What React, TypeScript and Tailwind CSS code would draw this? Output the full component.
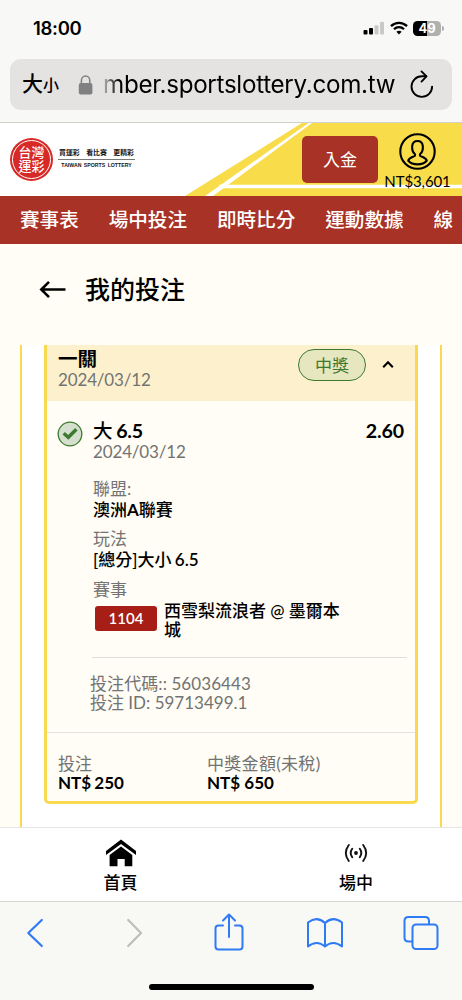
import type { ReactNode } from "react";

const NAV_ITEMS = ["賽事表", "場中投注", "即時比分", "運動數據", "線"];

function StatusBar() {
  return (
    <div className="flex h-[59px] items-start justify-between pl-[33px] pr-[18px] pt-[17px] font-['Inter',sans-serif]">
      <span className="text-[18.5px] leading-[22px] font-semibold tracking-[-0.3px]">18:00</span>
      <div className="flex h-[22px] items-center">
        <svg width="22" height="14" viewBox="0 0 22 14" className="mr-[5px]">
          <rect x="0.5" y="9" width="4" height="4.5" rx="1" fill="#000" />
          <rect x="6" y="7" width="4" height="6.5" rx="1" fill="#000" />
          <rect x="11.5" y="4.2" width="4" height="9.3" rx="1" fill="#c9c9c7" />
          <rect x="17" y="0.8" width="4" height="12.7" rx="1" fill="#c9c9c7" />
        </svg>
        <svg width="18" height="14" viewBox="0 0 18 14" className="mr-[5px]">
          <path d="M1 5.2C5.5 0.7 12.5 0.7 17 5.2" fill="none" stroke="#000" strokeWidth="2.4" />
          <path d="M4 8.3C6.8 5.5 11.2 5.5 14 8.3" fill="none" stroke="#000" strokeWidth="2.3" />
          <path d="M6.4 10.7C7.9 9.3 10.1 9.3 11.6 10.7L9 13.4Z" fill="#000" />
        </svg>
        <div className="flex h-[15px] w-[28px] items-center justify-center rounded-[4.5px] bg-[linear-gradient(90deg,#000_50%,#b0b0ae_50%)] text-[13px] leading-none font-bold text-white">
          49
        </div>
        <div className="ml-px h-[5px] w-[2px] rounded-r-full bg-[#b0b0ae]" />
      </div>
    </div>
  );
}

function AddressBar() {
  return (
    <div className="mx-[10px] flex h-[51px] items-center rounded-[11px] bg-[#e4e3e1] font-['Inter','Noto_Sans_CJK_TC',sans-serif]">
      <div className="ml-[12px] flex w-[38px] items-baseline font-medium">
        <span className="text-[21px] leading-[26px]">大</span>
        <span className="text-[16px] leading-[26px]">小</span>
      </div>
      <svg width="15" height="20" viewBox="0 0 15 20" className="ml-[18px]">
        <rect x="0.8" y="8" width="13.6" height="11.6" rx="2" fill="#808083" />
        <path d="M3.4 9V5.4a4.2 4.4 0 0 1 8.4 0V9" fill="none" stroke="#808083" strokeWidth="1.5" />
      </svg>
      <span className="ml-[10px] w-[294px] bg-[linear-gradient(90deg,#b8b8b6_0,#000_16px)] bg-clip-text text-[24.2px] leading-[32px] tracking-[-0.3px] whitespace-nowrap text-transparent">
        mber.sportslottery.com.tw
      </span>
      <svg width="26" height="30" viewBox="0 0 26 30" className="ml-[12px]" fill="none" stroke="#000" strokeWidth="1.9" strokeLinecap="round" strokeLinejoin="round">
        <path d="M23.1 16.6A10.3 10.3 0 1 1 12.8 6.3H17" />
        <path d="M12.5 1.4L17.5 6.4L12.5 11.6" />
      </svg>
    </div>
  );
}

function SiteHeader() {
  return (
    <header className="relative flex h-[73px] bg-white">
      <svg className="absolute inset-0" width="462" height="73" viewBox="0 0 462 73">
        <path d="M302 0H462V73H185Z" fill="#f9dc4a" />
        <path d="M308.5 0H312L213 73H205Z" fill="#fff" />
        <path d="M219 63.5H462" stroke="#fff" strokeWidth="3.6" />
      </svg>
      <div className="relative ml-[10px] mt-[15px] flex size-[43px] items-center justify-center rounded-full bg-[#d72a27]">
        <div className="flex size-[39px] flex-col items-center justify-center rounded-full border border-white text-[13px] leading-[13.5px] font-medium text-white">
          <span>台灣</span>
          <span>運彩</span>
        </div>
      </div>
      <div className="relative ml-[5px] mt-[23px] w-[77px] text-[#151515]">
        <div className="flex h-[14px] items-center justify-between border-b border-[#777] px-px text-[6.9px] font-bold whitespace-nowrap">
          <span>買運彩</span>
          <span>看比賽</span>
          <span>更精彩</span>
        </div>
        <div className="pt-px text-center font-['Liberation_Sans',sans-serif] text-[5.2px] leading-[8px] font-bold whitespace-nowrap [word-spacing:1px]">
          TAIWAN SPORTS LOTTERY
        </div>
      </div>
      <div className="relative ml-[167px] mt-[13px] flex h-[47px] w-[76px] items-center justify-center rounded-[5px] bg-[#a83226] text-[17px] text-white">
        入金
      </div>
      <div className="relative ml-[6px] mt-[10px] flex w-[67px] flex-col items-center">
        <svg width="38" height="38" viewBox="0 0 38 38" fill="none" stroke="#000" strokeWidth="2.1">
          <circle cx="18.5" cy="18.5" r="17.2" />
          <path d="M15.7 20.8C13.3 18.9 12.9 16.3 13.2 13C13.6 9.7 15.7 8 18.5 8s4.9 1.7 5.3 5c.3 3.3-.1 5.9-2.5 7.8-.8 1.2-.3 2.1.8 2.6 2.9 1.2 5.2 1.8 5.6 4.3-2.3 2.7-5.5 3.7-9.2 3.7s-6.9-1-9.2-3.7c.4-2.5 2.7-3.1 5.6-4.3 1.1-.5 1.6-1.4.8-2.6Z" />
        </svg>
        <span className="text-[15px] leading-[20px] tracking-[-0.1px] whitespace-nowrap">NT$3,601</span>
      </div>
    </header>
  );
}

function MainNav() {
  return (
    <nav className="flex h-[48px] items-center gap-[29.9px] overflow-hidden bg-[#a83226] pl-[20px] text-[19.6px] font-medium whitespace-nowrap text-white">
      {NAV_ITEMS.map((item) => (
        <span key={item}>{item}</span>
      ))}
    </nav>
  );
}

function Field({ label, children }: { label: string; children: ReactNode }) {
  return (
    <div className="mb-[8px]">
      <div className="leading-[21px] text-[#737373]">{label}</div>
      <div className="leading-[21px] font-medium [word-spacing:-1px]">{children}</div>
    </div>
  );
}

function BetCard() {
  return (
    <article className="mx-[22px] h-[459px] rounded-b-[5px] border-x-[3px] border-b-[3px] border-[#f9d94f] bg-[#fffdf5] text-[17px]">
      <div className="flex h-[56px] bg-[#fdf1cd] pl-[11px]">
        <div className="mt-[3px] w-[240px]">
          <div className="text-[19.6px] leading-[22px] font-bold">一關</div>
          <div className="leading-[20px] tracking-[-0.15px] text-[#737373]">2024/03/12</div>
        </div>
        <div className="mt-[4px] flex h-[32px] w-[68px] items-center justify-center rounded-full border-[1.5px] border-[#3d7a30] bg-[#e6e6bf] pt-[2px] text-[#41792f]">
          中獎
        </div>
        <svg width="12" height="9" viewBox="0 0 12 9" className="ml-[16px] mt-[15px]" fill="none" stroke="#000" strokeWidth="2.1">
          <path d="M1.2 7.2L6 2.3L10.8 7.2" />
        </svg>
      </div>

      <div className="flex h-[77px] pl-[11px] pr-[11px] pt-[20px]">
        <svg width="26" height="26" viewBox="0 0 26 26" className="-ml-px">
          <circle cx="13" cy="13" r="11.8" fill="#d5dfcd" stroke="#3d7a30" strokeWidth="1.3" />
          <path d="M6.7 12.2L11.3 16.3L19.4 8.3" fill="none" stroke="#3d7a30" strokeWidth="3.4" />
        </svg>
        <div className="ml-[10px] flex-1">
          <div className="text-[19.6px] leading-[20px] font-medium tracking-[-0.2px] [word-spacing:-1px]">
            大 <span className="font-bold">6.5</span>
          </div>
          <div className="leading-[21px] tracking-[-0.15px] text-[#737373]">2024/03/12</div>
        </div>
        <div className="text-[19.6px] leading-[20px] font-bold tracking-[-0.1px]">2.60</div>
      </div>

      <div className="ml-[45px] mr-[8px] h-[180px] border-b border-[#dededa] pl-px">
        <Field label="聯盟:">
          澳洲<span className="font-bold">A</span>聯賽
        </Field>
        <Field label="玩法">
          [總分]大小 <span className="font-semibold">6.5</span>
        </Field>
        <div className="pt-px leading-[21px] text-[#737373]">賽事</div>
        <div className="ml-[2px] flex">
          <div className="mt-[6px] mr-[7px] flex h-[25px] w-[62px] items-center justify-center rounded-[3px] bg-[#a61e15] text-[15px] font-semibold text-white">
            1104
          </div>
          <div className="mt-[2px] w-[190px] leading-[18.5px] font-medium">西雪梨流浪者 @ 墨爾本城</div>
        </div>
      </div>

      <div className="h-[75px] border-b border-[#e2e2de] pl-[43px] pt-[17px] leading-[18.5px] text-[#737373]">
        <div className="tracking-[0.08px]">投注代碼:: 56036443</div>
        <div>投注 ID: 59713499.1</div>
      </div>

      <div className="flex pl-[11px] pt-[21px] leading-[19px]">
        <div className="w-[149px]">
          <div className="text-[#737373]">投注</div>
          <div className="font-bold [word-spacing:-1px]">NT$ 250</div>
        </div>
        <div>
          <div className="tracking-[0.3px] text-[#737373]">中獎金額(未稅)</div>
          <div className="font-bold">NT$ 650</div>
        </div>
      </div>
    </article>
  );
}

function TabBar() {
  return (
    <div className="flex h-[74px] border-t border-[#e5e5e5] bg-white text-[17px] leading-[22px] font-medium">
      <div className="flex w-[241px] shrink-0 flex-col items-center pt-[10px]">
        <svg width="32" height="30" viewBox="0 0 32 30" fill="#000">
          <path d="M16 1.5L31 13V17L16 6L1 17V13Z" />
          <path d="M16 8.5L27.3 17V28.3H19.7V21H12.5V28.3H4.6V17Z" />
        </svg>
        <span className="mt-[4px]">首頁</span>
      </div>
      <div className="flex w-[230px] shrink-0 flex-col items-center pt-[14px]">
        <svg width="24" height="22" viewBox="0 0 24 22" fill="none" stroke="#111" strokeWidth="1.9" strokeLinecap="round">
          <circle cx="12" cy="11" r="1.9" fill="#111" stroke="none" />
          <path d="M8.2 6.8Q5.2 11 8.2 15.2M15.8 6.8Q18.8 11 15.8 15.2M4.8 3Q-1.2 11 4.8 19M19.2 3Q25.2 11 19.2 19" />
        </svg>
        <span className="mt-[8px]">場中</span>
      </div>
    </div>
  );
}

function BrowserToolbar() {
  return (
    <div className="h-[99px] border-t border-[#d5d5d3] bg-[#f8f8f5]">
      <div className="flex h-[62px] items-center">
        <svg width="18" height="30" viewBox="0 0 18 30" className="ml-[26px]" fill="none" stroke="#2f7af5" strokeWidth="2.2" strokeLinecap="round" strokeLinejoin="round">
          <path d="M15.8 2L2.3 15L15.8 28" />
        </svg>
        <svg width="18" height="30" viewBox="0 0 18 30" className="ml-[81px]" fill="none" stroke="#bdbdbb" strokeWidth="2.2" strokeLinecap="round" strokeLinejoin="round">
          <path d="M3.2 2L16 15L3.2 28" />
        </svg>
        <svg width="32" height="40" viewBox="0 0 32 40" className="mb-[5px] ml-[70px]" fill="none" stroke="#2f7af5" strokeWidth="2" strokeLinecap="round" strokeLinejoin="round">
          <path d="M10 14.5H5.5Q2.5 14.5 2.5 17.5V35.5Q2.5 38.5 5.5 38.5H26.5Q29.5 38.5 29.5 35.5V17.5Q29.5 14.5 26.5 14.5H22" />
          <path d="M16 26V4M10 9.5L16 3.5L22 9.5" />
        </svg>
        <svg width="38" height="32" viewBox="0 0 38 32" className="ml-[61px]" fill="none" stroke="#2f7af5" strokeWidth="2" strokeLinejoin="round">
          <path d="M19 6Q11 -1.5 2 5.5V29.5Q11 22.5 19 29.5Q27 22.5 36 29.5V5.5Q27 -1.5 19 6ZM19 6V29.5" />
        </svg>
        <svg width="36" height="36" viewBox="0 0 36 36" className="ml-[59px]" fill="none" stroke="#2f7af5" strokeWidth="2">
          <rect x="9.5" y="9.5" width="25" height="24.5" rx="3.5" />
          <path d="M9.5 26.5H5.5Q1.5 26.5 1.5 22.5V6Q1.5 2 5.5 2H22Q26 2 26 6V9.5" />
        </svg>
      </div>
      <div className="mx-auto mt-[20px] h-[6px] w-[165px] rounded-full bg-black" />
    </div>
  );
}

export default function App() {
  return (
    <div className="flex h-[1000px] w-[462px] flex-col overflow-hidden bg-[#fffdf5] font-['Lato','Noto_Sans_CJK_TC',sans-serif] text-black">
      <div className="h-[123px] border-b border-[#d3d2ca] bg-[#f8f8f6]">
        <StatusBar />
        <AddressBar />
      </div>
      <SiteHeader />
      <MainNav />
      <main className="h-[583px] overflow-hidden">
        <div className="flex h-[101px] items-start pl-[39px] pt-[30px]">
          <svg width="28" height="20" viewBox="0 0 28 20" className="mt-[6px]" fill="none" stroke="#000" strokeWidth="2.6">
            <path d="M26.5 9.5H2.5M10 1.8L2.3 9.5L10 17.2" />
          </svg>
          <h1 className="ml-[18px] text-[25px] leading-[30px] font-medium">我的投注</h1>
        </div>
        <section className="mx-[20px] h-[482px] border-x-2 border-[#f9d94f] bg-white">
          <BetCard />
        </section>
      </main>
      <TabBar />
      <BrowserToolbar />
    </div>
  );
}
